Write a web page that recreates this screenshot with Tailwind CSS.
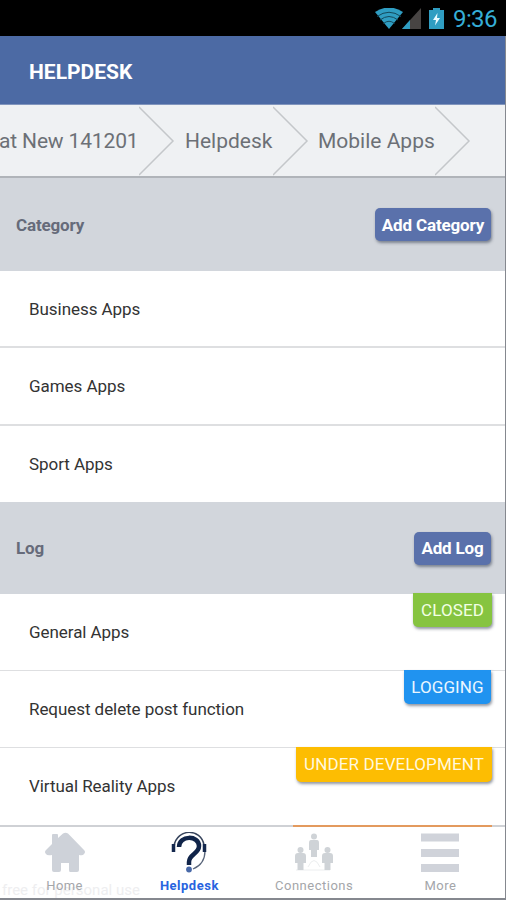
<!DOCTYPE html>
<html lang="en">
<head>
<meta charset="utf-8">
<title>Helpdesk</title>
<script src="https://cdn.jsdelivr.net/npm/@tailwindcss/browser@4"></script>
</head>
<body class="w-[506px] h-[900px] overflow-hidden bg-white font-['Roboto',sans-serif]">
<div class="w-[506px] h-[900px] flex flex-col overflow-hidden">
  <div class="h-9 shrink-0 bg-black flex items-center justify-end pr-[9px] pt-[2px] text-[#35aed6]">
    <svg class="w-7 h-[22px] shrink-0" viewBox="0 0 28 22"><path d="M0 4Q14-5 28 4L14 21Z" fill="#2f9dc2"/><path d="M2 8.500Q14 0 26 8.500M5 12Q14 5 23 12M8.500 15.500Q14 11 19.500 15.500" fill="none" stroke="#14495c" stroke-width="1"/></svg>
    <svg class="w-5 h-[22px] shrink-0 ml-[-1px]" viewBox="0 0 20 22"><path d="M0 21L19 0V21Z" fill="#474443"/><path d="M0 21L8 12V21Z" fill="#2f9dc2"/></svg>
    <svg class="w-[15px] h-[22px] shrink-0 ml-[7px]" viewBox="0 0 15 22"><path d="M0 2H4V0H11V2H15V21H0Z" fill="#2f9dc2"/><path d="M8.500 5L4 12H7L6 17.500L11 10H8Z" fill="#eafaff"/></svg>
    <span class="ml-[9px] w-[44px] text-[24px] leading-6 whitespace-nowrap tracking-[-0.6px]">9:36</span>
  </div>
  <div class="h-[864px] flex flex-col border-r border-[#85888f]">
    <header class="h-[69px] shrink-0 bg-[#4c6aa4] border-b border-[#8195bd] flex items-center pl-[29px] pt-[5px] text-white font-bold text-[21px]"><span>HELPDESK</span></header>
    <nav class="h-[73px] shrink-0 bg-[#eff1f3] border-b-2 border-[#b0b4b9] text-[#6c7076] text-[21px] leading-[72px] whitespace-nowrap flex overflow-hidden">
      <span class="w-[139px] shrink-0 -indent-px tracking-[-0.15px]">at New 141201</span>
      <svg class="w-9 h-[72px] shrink-0" viewBox="0 0 36 72"><path d="M0 2L34 36L0 70" fill="none" stroke="#c4c7ca" stroke-width="1.500"/></svg>
      <span class="w-[98px] pl-[10px]">Helpdesk</span>
      <svg class="w-9 h-[72px] shrink-0" viewBox="0 0 36 72"><path d="M0 2L34 36L0 70" fill="none" stroke="#c4c7ca" stroke-width="1.500"/></svg>
      <span class="w-[126px] pl-[9px]">Mobile Apps</span>
      <svg class="w-9 h-[72px] shrink-0" viewBox="0 0 36 72"><path d="M0 2L34 36L0 70" fill="none" stroke="#c4c7ca" stroke-width="1.500"/></svg>
    </nav>
    <section class="h-[93px] shrink-0 bg-[#d2d6dc] flex items-center justify-between pl-4 pr-[14px] font-bold text-[17px]">
      <h2 class="pt-0.5 text-[#666b7a] tracking-[-0.15px]">Category</h2>
      <button class="w-[116px] h-[33px] pt-0.5 rounded-[5px] bg-[#5a71ab] text-white shadow-[1px_2px_3px_rgba(40,50,70,0.5)] whitespace-nowrap tracking-[-0.15px]">Add Category</button>
    </section>
    <ul class="shrink-0 text-[17px] text-[#333] tracking-[-0.06px]">
      <li class="h-[77px] pl-[29px] pt-0.5 flex items-center border-b-2 border-[#dedfe1]">Business Apps</li>
      <li class="h-[78px] pl-[29px] pt-0.5 flex items-center border-b-2 border-[#dedfe1]">Games Apps</li>
      <li class="h-[76px] pl-[29px] pt-px flex items-center">Sport Apps</li>
    </ul>
    <section class="h-[92px] shrink-0 bg-[#d2d6dc] flex items-center justify-between pl-4 pr-[14px] font-bold text-[17px]">
      <h2 class="pt-0.5 text-[#666b7a] tracking-[-0.15px]">Log</h2>
      <button class="w-[77px] h-[33px] pt-0.5 rounded-[5px] bg-[#5a71ab] text-white shadow-[1px_2px_3px_rgba(40,50,70,0.5)] whitespace-nowrap tracking-[-0.15px]">Add Log</button>
    </section>
    <ul class="shrink-0 text-[17px] text-[#333] tracking-[-0.06px]">
      <li class="h-[77px] pl-[29px] pr-[13px] flex items-center justify-between border-b border-[#dedfe1]"><span class="pt-0.5">General Apps</span><span class="self-start -mt-px w-[79px] h-[34px] leading-[34px] rounded-b-[5px] bg-[#86c440] text-[#f2ffe5] text-center tracking-[0.1px] shadow-[1px_2px_3px_rgba(40,50,70,0.5)]">CLOSED</span></li>
      <li class="h-[77px] pl-[29px] pr-[14px] flex items-center justify-between border-b border-[#dedfe1]"><span class="pt-0.5">Request delete post function</span><span class="self-start -mt-px w-[87px] h-[34px] leading-[34px] rounded-b-[5px] bg-[#2093f0] text-[#eaf6ff] text-center tracking-[0.1px] shadow-[1px_2px_3px_rgba(40,50,70,0.5)]">LOGGING</span></li>
      <li class="h-[77px] pl-[29px] pr-[13px] flex items-center justify-between"><span class="pt-px">Virtual Reality Apps</span><span class="self-start -mt-px w-[196px] h-[35px] leading-[34px] rounded-b-[5px] bg-[#fdbd02] text-[#fff8df] text-center tracking-[0.15px] shadow-[1px_2px_3px_rgba(40,50,70,0.5)] whitespace-nowrap">UNDER DEVELOPMENT</span></li>
    </ul>
    <div class="h-[2px] shrink-0 bg-[#cfd1d5] pl-[293px] pr-[13px]"><div class="h-[2px] bg-[#e39a5e]"></div></div>
    <footer class="relative h-[73px] shrink-0 border-b-2 border-[#85888f] grid grid-cols-4 text-[13px] leading-4 text-[#a4a6aa]">
      <div class="flex flex-col items-center pt-[5px] pl-[3px]">
        <svg class="w-[42px] h-[42px]" viewBox="0 0 42 42"><path d="M8 3Q8 2 9 2H13Q14 2 14 3V6L19 1.500Q21.500 0 24 1.500L40 18Q42 20 40 22Q39 24 35 23V38Q35 40 33 40H26Q25 40 25 38V31H17V38Q17 40 15 40H10Q8 40 8 38V23Q3 24 2 22Q0 20 2 18L8 12Z" fill="#ced2d9"/></svg>
        <span class="mt-[4px] tracking-[0.4px]">Home</span>
      </div>
      <div class="flex flex-col items-center pt-[5px] text-[#2864df] font-bold">
        <svg class="w-[36px] h-[42px]" viewBox="0 0 36 42"><path d="M3 14C6-4 30-4 33 13" fill="none" stroke="#37445c" stroke-width="1.500"/><path d="M34 19Q34 32 22 37" fill="none" stroke="#59657a" stroke-width="1.300"/><path d="M2.500 12V20M33.500 12V20" stroke="#14284e" stroke-width="3.500"/><path d="M8 15C8 3 28 3 28 14C28 22 18 22 18 30V33" fill="none" stroke="#102449" stroke-width="4.500"/><circle cx="18" cy="37.500" r="2.900" fill="#4969a8"/></svg>
        <span class="mt-[4px] tracking-[0.5px]">Helpdesk</span>
      </div>
      <div class="flex flex-col items-center pt-[5px] pr-[3px]">
        <svg class="w-[40px] h-[42px]" viewBox="0 0 40 42"><path d="M14 35Q20 22 26 35M2 38H36" fill="none" stroke="#eceeef"/><g fill="#cfd3d7"><circle cx="20" cy="4.500" r="3"/><path d="M17 8H23Q25 8 25 11V18H23V25H17V18H15V11Q15 8 17 8Z"/><circle cx="6.500" cy="18" r="3"/><path d="M4 21H9Q12 21 12 24V31H9.500V38H3.500V31H1V24Q1 21 4 21Z"/><circle cx="33.500" cy="18" r="3"/><path d="M31 21H36Q39 21 39 24V31H36.500V38H30.500V31H28V24Q28 21 31 21Z"/></g></svg>
        <span class="mt-[4px] tracking-[0.5px]">Connections</span>
      </div>
      <div class="flex flex-col items-center pt-[5px] pr-[3px]">
        <svg class="w-[40px] h-[42px]" viewBox="0 0 40 42"><path d="M1 1.500H39V9.500H1ZM1 17H39V25H1ZM1 32H39V40H1Z" fill="#d0d3da"/></svg>
        <span class="mt-[4px] tracking-[0.5px]">More</span>
      </div>
      <span class="absolute left-[2px] top-[55px] text-[15px] leading-4 text-[#eeeef0] whitespace-nowrap -z-10">free for personal use</span>
    </footer>
  </div>
</div>
</body>
</html>
